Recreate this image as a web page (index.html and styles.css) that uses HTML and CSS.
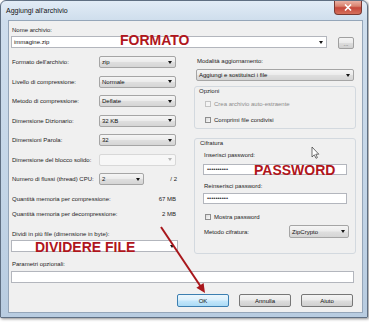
FILE: index.html
```html
<!DOCTYPE html>
<html>
<head>
<meta charset="utf-8">
<link rel="stylesheet" href="styles.css">
</head>
<body>
<div class="window">
  <div class="titlebar">
    <span class="title">Aggiungi all'archivio</span>
    <span class="close"><svg width="8" height="7" viewBox="0 0 8 7"><path d="M1 0.5 L7 6.5 M7 0.5 L1 6.5" stroke="#fff" stroke-width="1.6"/></svg></span>
  </div>
  <div class="client">
    <div class="lbl top-lbl">Nome archivio:</div>
    <div class="name-row">
      <div class="combo edit name-combo"><span class="val">immagine.zip</span><span class="arr"></span></div>
      <div class="btn dots">...</div>
    </div>
    <div class="cols">
      <div class="left">
        <div class="form">
          <span class="lbl">Formato dell'archivio:</span>
          <div class="combo"><span class="val">zip</span><span class="arr"></span></div>
          <span class="lbl">Livello di compressione:</span>
          <div class="combo"><span class="val">Normale</span><span class="arr"></span></div>
          <span class="lbl">Metodo di compressione:</span>
          <div class="combo"><span class="val">Deflate</span><span class="arr"></span></div>
          <span class="lbl">Dimensione Dizionario:</span>
          <div class="combo"><span class="val">32 KB</span><span class="arr"></span></div>
          <span class="lbl">Dimensioni Parola:</span>
          <div class="combo"><span class="val">32</span><span class="arr"></span></div>
          <span class="lbl">Dimensione del blocco solido:</span>
          <div class="combo disabled"><span class="val"></span><span class="arr"></span></div>
          <span class="lbl">Numero di flussi (thread) CPU:</span>
          <div class="thread-cell">
            <div class="combo small"><span class="val">2</span><span class="arr"></span></div>
            <span class="of">/ 2</span>
          </div>
        </div>
        <div class="mem first"><span>Quantità memoria per compressione:</span><span>67 MB</span></div>
        <div class="mem"><span>Quantità memoria per decompressione:</span><span>2 MB</span></div>
        <div class="lbl split-lbl">Dividi in più file (dimensione in byte):</div>
        <div class="combo edit split"><span class="val"></span><span class="arr"></span></div>
      </div>
      <div class="right">
        <div class="lbl r-lbl">Modalità aggiornamento:</div>
        <div class="combo wide"><span class="val">Aggiungi e sostituisci i file</span><span class="arr"></span></div>
        <div class="group opz">
          <div class="glbl">Opzioni</div>
          <div class="chk dis first"><span class="box"></span>Crea archivio auto-estraente</div>
          <div class="chk second"><span class="box"></span>Comprimi file condivisi</div>
        </div>
        <div class="group cif">
          <div class="glbl">Cifratura</div>
          <div class="lbl glabel pw-lbl1">Inserisci password:</div>
          <div class="pw pw1">••••••••••</div>
          <div class="lbl glabel pw-lbl2">Reinserisci password:</div>
          <div class="pw pw2">••••••••••</div>
          <div class="chk show"><span class="box"></span>Mostra password</div>
          <div class="meth">
            <span class="lbl">Metodo cifratura:</span>
            <div class="combo zc"><span class="val">ZipCrypto</span><span class="arr"></span></div>
          </div>
        </div>
      </div>
    </div>
    <div class="lbl par-lbl">Parametri opzionali:</div>
    <div class="combo edit par"></div>
    <div class="btns">
      <div class="btn def">OK</div>
      <div class="btn">Annulla</div>
      <div class="btn">Aiuto</div>
    </div>
  </div>

  <div class="note n-formato">FORMATO</div>
  <div class="note n-password">PASSWORD</div>
  <div class="note n-dividere">DIVIDERE FILE</div>

  <svg class="overlay" width="369" height="325" viewBox="0 0 369 325">
    <line x1="161" y1="227" x2="201" y2="287" stroke="#a8161b" stroke-width="2"/>
    <polygon points="205,293 203.6,283 196.4,287.8" fill="#a8161b"/>
    <path d="M312 147 L312 157 L314.3 154.8 L316 158.3 L317.4 157.6 L315.8 154.2 L318.8 154.2 Z" fill="#fff" stroke="#333" stroke-width="0.7"/>
  </svg>
</div>
</body>
</html>
```

FILE: styles.css
```css
* { box-sizing: border-box; }
html, body { margin: 0; padding: 0; }
body {
  background: #ffffff;
  font-family: "Liberation Sans", Arial, sans-serif;
  width: 369px;
  height: 325px;
  overflow: hidden;
}
.window {
  position: relative;
  width: 368px;
  height: 318px;
  border: 1px solid #5f6f82;
  border-radius: 6px 6px 1px 1px;
  background: linear-gradient(180deg, #e2ecf6 0, #cfdeed 19px, #c3d5e7 60%, #b8cce0 100%);
  padding: 0 4px 4px 7px;
  box-shadow: 1px 1px 3px rgba(0, 0, 0, 0.45);
}
.titlebar {
  height: 19px;
  display: flex;
  align-items: flex-start;
}
.title {
  font-size: 7px;
  line-height: 19px;
  margin-left: -2px;
  color: #111;
}
.close {
  margin-left: auto;
  margin-right: 1px;
  width: 28px;
  height: 14px;
  display: flex;
  align-items: center;
  justify-content: center;
  border: 1px solid #7a3a32;
  border-top: none;
  border-radius: 0 0 4px 4px;
  background: linear-gradient(180deg, #eab1a4 0, #d9826f 40%, #c5473a 52%, #d5705c 100%);
}
.client {
  height: 293px;
  border: 1px solid #95a6b9;
  background: #f0f0f0;
  padding: 4px 0 0 2px;
}
.lbl {
  font-size: 6px;
  line-height: 10px;
  color: #1c1c1c;
  white-space: nowrap;
}
.top-lbl { margin-left: 1px; }
.name-row {
  display: flex;
  margin-top: 1px;
}
.combo {
  display: flex;
  align-items: center;
  height: 12px;
  border: 1px solid #a5a5a5;
  border-radius: 2px;
  background: linear-gradient(180deg, #f5f5f5 0, #ececec 45%, #dedede 55%, #d5d5d5 100%);
  font-size: 6px;
  padding-left: 2px;
  color: #111;
  white-space: nowrap;
}
.combo .arr {
  margin-left: auto;
  margin-right: 3px;
  width: 0;
  height: 0;
  border-left: 2.5px solid transparent;
  border-right: 2.5px solid transparent;
  border-top: 3px solid #151515;
}
.combo.edit {
  background: #ffffff;
  border-color: #b3b6bd;
  border-radius: 0;
}
.combo.disabled {
  background: #f7f7f7;
  border-color: #d8d8d8;
}
.combo.disabled .arr { border-top-color: #b5b5b5; }
.name-combo { width: 316px; }
.btn {
  display: flex;
  align-items: center;
  justify-content: center;
  width: 52px;
  height: 13px;
  border: 1px solid #777777;
  border-radius: 2px;
  background: linear-gradient(180deg, #f4f4f4 0, #ebebeb 45%, #dcdcdc 55%, #d0d0d0 100%);
  font-size: 6px;
  color: #111;
}
.btn.dots {
  width: 16px;
  height: 12px;
  margin-left: 11px;
  margin-top: 1px;
  border-color: #a0a0a0;
  align-items: flex-end;
  line-height: 8px;
  color: #555;
}
.btn.def {
  border-color: #3c7fb1;
  background: linear-gradient(180deg, #ecf7fd 0, #dcf0fc 45%, #c2e6fb 55%, #acdbf5 100%);
}
.cols {
  display: flex;
  margin-top: 7px;
}
.left { width: 167px; }
.right {
  width: 162px;
  margin-left: 16px;
}
.form {
  display: grid;
  grid-template-columns: 88px 77px;
  grid-auto-rows: 12px;
  row-gap: 7.5px;
  align-items: center;
}
.form .lbl { padding-left: 1px; }
.thread-cell {
  display: flex;
  align-items: center;
  justify-content: space-between;
  width: 78px;
}
.combo.small { width: 45px; }
.of { font-size: 6px; color: #1c1c1c; }
.mem {
  display: flex;
  justify-content: space-between;
  width: 165px;
  padding-left: 1px;
  font-size: 6px;
  line-height: 15px;
  color: #1c1c1c;
  white-space: nowrap;
}
.mem.first { margin-top: 7px; }
.split-lbl {
  margin-top: 6.5px;
  padding-left: 1px;
}
.split {
  margin-top: 1.5px;
  width: 167px;
}
.r-lbl { padding-left: 3px; }
.combo.wide {
  width: 158px;
  margin: 3px 0 0 2px;
}
.group {
  border: 1px solid #d3d9df;
  border-radius: 3px;
}
.opz {
  margin-top: 5px;
  height: 43px;
}
.cif {
  margin-top: 9px;
  height: 116px;
}
.glbl {
  font-size: 6px;
  line-height: 8px;
  color: #1c1c1c;
  margin-left: 4px;
}
.cif .glbl { margin-left: 5px; }
.chk {
  display: flex;
  align-items: center;
  font-size: 6px;
  line-height: 10px;
  color: #1c1c1c;
  margin-left: 10px;
  white-space: nowrap;
}
.chk .box {
  width: 6px;
  height: 6px;
  border: 1px solid #8e8e8e;
  background: linear-gradient(135deg, #d9d9d9, #fafafa);
  margin-right: 3px;
}
.chk.dis { color: #8c8c8c; }
.chk.dis .box {
  border-color: #c4c4c4;
  background: #f4f4f4;
}
.opz .chk.first { margin-top: 4px; }
.opz .chk.second { margin-top: 6px; }
.glabel { margin-left: 9px; }
.pw-lbl1 { margin-top: 3px; }
.pw-lbl2 { margin-top: 6px; }
.pw {
  width: 144px;
  height: 11px;
  margin-left: 8px;
  border: 1px solid #b3b6bd;
  background: #ffffff;
  font-size: 6px;
  line-height: 9px;
  padding-left: 3px;
  color: #333;
}
.pw1 { margin-top: 4px; }
.pw2 { margin-top: 2px; }
.chk.show { margin-top: 8px; margin-left: 10px; }
.meth {
  display: flex;
  align-items: center;
  height: 13px;
  margin-top: 3px;
  padding-left: 9px;
  padding-right: 6px;
}
.combo.zc {
  width: 60px;
  height: 13px;
  margin-left: auto;
}
.par-lbl {
  margin-top: 5px;
  padding-left: 1px;
}
.combo.par {
  margin-top: 2px;
  width: 343px;
}
.btns {
  display: flex;
  justify-content: flex-end;
  gap: 10px;
  width: 342px;
  margin-top: 11px;
}
.note {
  position: absolute;
  font-size: 14px;
  line-height: 14px;
  font-weight: bold;
  color: #b0161c;
  white-space: nowrap;
}
.n-formato { left: 119px; top: 32px; }
.n-password { left: 253px; top: 162px; }
.n-dividere { left: 34px; top: 239px; }
.overlay {
  position: absolute;
  left: -1px;
  top: -1px;
}
```
